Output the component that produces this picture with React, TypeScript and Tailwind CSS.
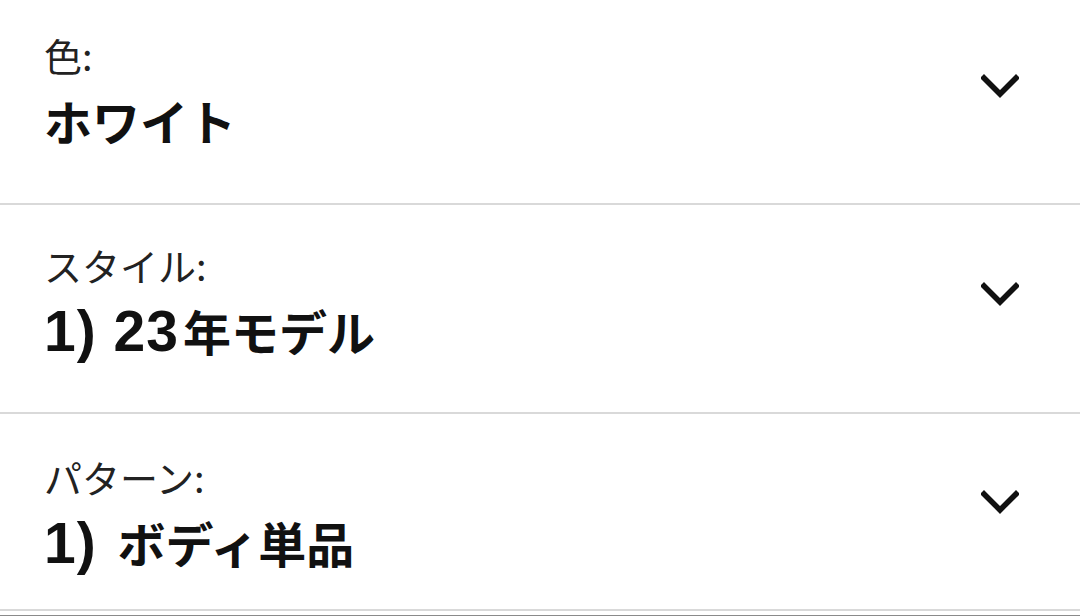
const rows = [
  { label: "色:", prefix: "", value: "ホワイト", h: "h-[205px]", pt: "pt-[32px]", chev: "mt-[74px]" },
  { label: "スタイル:", prefix: "1) 23", value: "年モデル", h: "h-[209px]", pt: "pt-[37px]", chev: "mt-[77px]" },
  { label: "パターン:", prefix: "1) ", value: "ボディ単品", h: "h-[197px]", pt: "pt-[40px]", chev: "mt-[76px]" },
];

function Chevron() {
  return (
    <svg width="38" height="24" viewBox="0 0 38 24" fill="none">
      <path d="M3 4 L19 20 L35 4" stroke="#111" strokeWidth="5.5" strokeLinecap="square" strokeLinejoin="miter" />
    </svg>
  );
}

export default function App() {
  return (
    <div
      className="h-[616px] w-[1080px] overflow-hidden bg-white"
      style={{ fontFamily: '"Noto Sans CJK JP", "Noto Sans", sans-serif' }}
    >
      {rows.map((row) => (
        <div key={row.label} className={`flex border-b-2 border-[#d9d9d9] ${row.h}`}>
          <div className={`flex-1 pl-[44px] ${row.pt}`}>
            <div className="text-[38px] leading-[1.2] text-[#222]">{row.label}</div>
            <div className="mt-[14px] text-[48px] font-bold leading-[1.2] text-[#111]">
              {row.prefix && (
                <span className="mr-[4px] font-['Liberation_Sans',sans-serif] text-[57px] leading-none tracking-[1px]">
                  {row.prefix}
                </span>
              )}
              {row.value}
            </div>
          </div>
          <div className={`pr-[61px] ${row.chev}`}>
            <Chevron />
          </div>
        </div>
      ))}
      <div className="mt-[4px] h-[3px] bg-[#8a8a8a]" />
    </div>
  );
}
